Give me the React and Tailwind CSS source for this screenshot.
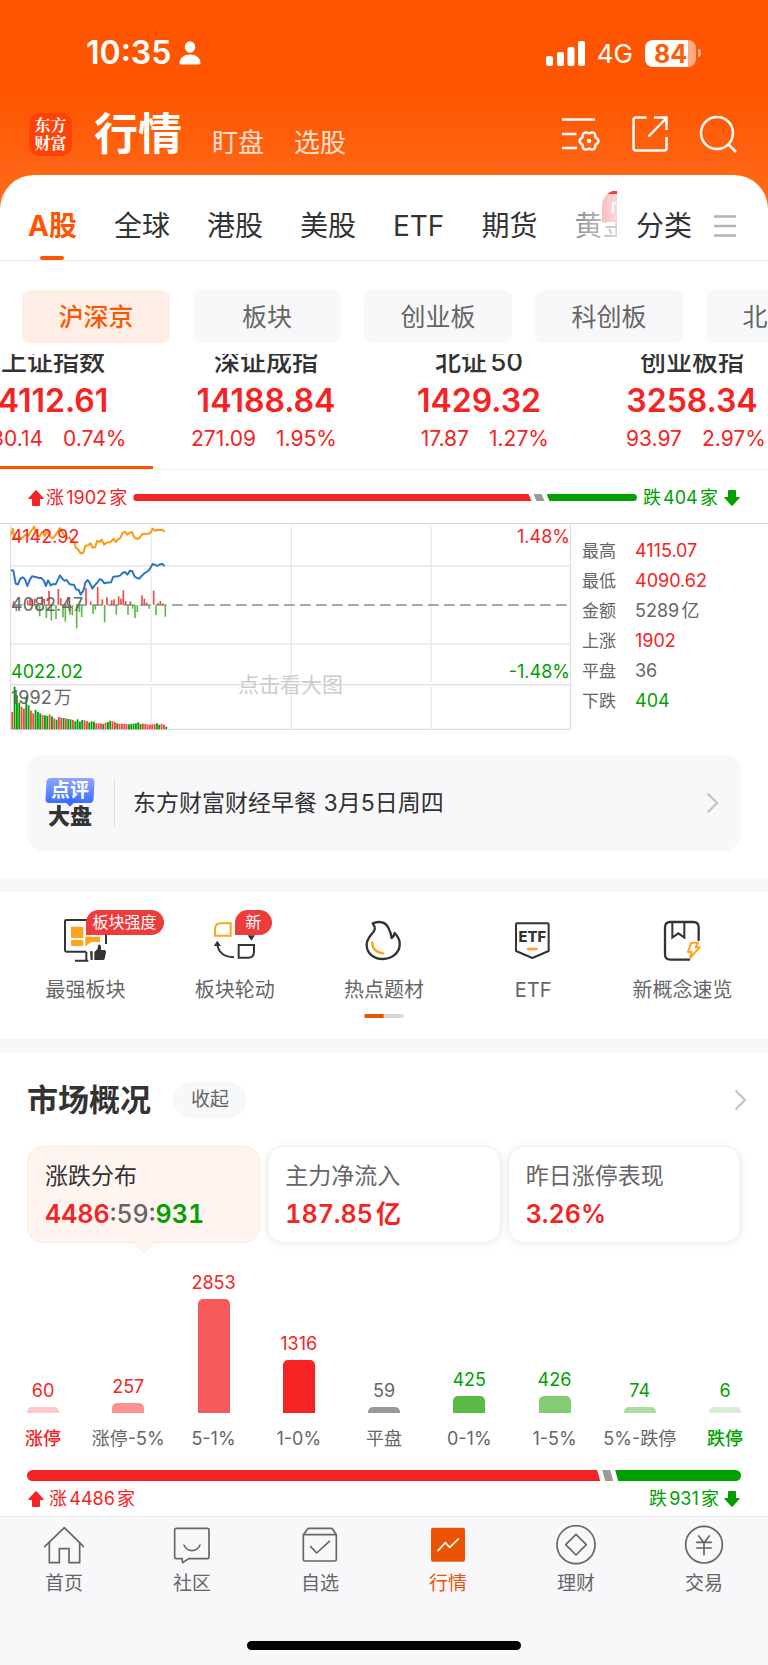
//
// MARKET PAGE
// ===========
// The A-share market page: index strip, intraday chart, shortcuts and the
// rise / fall distribution, with the application's bottom navigation.
//
const marketTabs = ["A股", "全球", "港股", "美股", "ETF", "期货"];
const boards = ["沪深京", "板块", "创业板", "科创板", "北交所"];

const indices = [
    { name: "上证指数", value: "4112.61", change: "30.14", percent: "0.74%" },
    { name: "深证成指", value: "14188.84", change: "271.09", percent: "1.95%" },
    { name: "北证50", value: "1429.32", change: "17.87", percent: "1.27%" },
    { name: "创业板指", value: "3258.34", change: "93.97", percent: "2.97%" },
];

const stats = [
    { label: "最高", value: "4115.07", colour: "text-[#f52323]" },
    { label: "最低", value: "4090.62", colour: "text-[#f52323]" },
    { label: "金额", value: "5289亿", colour: "text-[#666666]" },
    { label: "上涨", value: "1902", colour: "text-[#f52323]" },
    { label: "平盘", value: "36", colour: "text-[#666666]" },
    { label: "下跌", value: "404", colour: "text-[#00a000]" },
];

const distribution = [
    { label: "涨停", count: 60, height: 6, bar: "bg-[#fcc8c8]", text: "text-[#f52323]", labelText: "text-[#f52323] font-medium" },
    { label: "涨停-5%", count: 257, height: 10, bar: "bg-[#f99192]", text: "text-[#f52323]", labelText: "text-[#666666]" },
    { label: "5-1%", count: 2853, height: 114, bar: "bg-[#f75a5b]", text: "text-[#f52323]", labelText: "text-[#666666]" },
    { label: "1-0%", count: 1316, height: 53, bar: "bg-[#f52323]", text: "text-[#f52323]", labelText: "text-[#666666]" },
    { label: "平盘", count: 59, height: 6, bar: "bg-[#999999]", text: "text-[#666666]", labelText: "text-[#666666]" },
    { label: "0-1%", count: 425, height: 17, bar: "bg-[#5aba45]", text: "text-[#00a000]", labelText: "text-[#666666]" },
    { label: "1-5%", count: 426, height: 17, bar: "bg-[#84cc74]", text: "text-[#00a000]", labelText: "text-[#666666]" },
    { label: "5%-跌停", count: 74, height: 6, bar: "bg-[#addda2]", text: "text-[#00a000]", labelText: "text-[#666666]" },
    { label: "跌停", count: 6, height: 6, bar: "bg-[#d6eed1]", text: "text-[#00a000]", labelText: "text-[#00a000] font-medium" },
];

//
// Intraday series
// ===============
const averageLine = "33,60 38,40 44,68 52,70 60,66 68,68 76,58 84,62 92,50 102,34 110,58 118,64 126,50 134,62 142,46 152,66 160,68 170,54 180,38 190,56 200,70 208,66 216,78 222,80 228,98 234,102 242,114 250,112 256,92 264,90 271,84 278,97 285,96 292,76 299,80 305,73 312,88 320,82 332,80 341,70 347,80 354,72 361,68 368,52 375,50 382,58 390,52 396,50 403,66 411,71 418,68 428,56 445,55 452,52 458,40 464,46 474,44 487,43 494,50";
const priceLine = "33,164 40,166 47,205 54,207 61,190 68,186 75,192 82,212 90,192 96,183 110,186 117,188 124,188 131,195 138,212 144,195 152,210 159,206 167,207 180,180 187,190 194,196 200,194 208,206 216,208 222,208 228,222 236,224 242,238 250,226 256,202 263,194 270,204 277,220 284,210 291,203 299,192 305,193 313,204 320,202 333,201 340,184 354,183 361,180 368,172 375,170 382,178 390,166 397,168 404,184 411,188 418,190 425,182 433,174 440,170 448,163 458,146 465,148 472,152 480,147 487,146 494,152";

const strengthUp = [
    [41, 258], [83, 255], [90, 250], [97, 252], [104, 250], [126, 243], [133, 250], [147, 227],
    [175, 221], [182, 248], [203, 245], [258, 217], [272, 258], [293, 215], [307, 252], [321, 246],
    [335, 255], [342, 252], [356, 243], [363, 250], [370, 225], [377, 257], [391, 258], [426, 240],
    [433, 250], [440, 262], [461, 226], [474, 264], [481, 257], [488, 264],
];
const strengthDown = [
    [49, 288], [112, 283], [119, 303], [139, 308], [154, 315], [168, 311], [189, 306], [196, 319],
    [210, 298], [217, 300], [230, 339], [238, 290], [245, 305], [279, 296], [286, 283], [314, 321],
    [349, 298], [384, 298], [398, 280], [405, 308], [412, 290], [447, 280], [468, 299], [496, 304],
];

// Volume per interval, "r" for a rising interval and "g" for a falling one.
const volume = "r52 g128 g102 g80 r68 r62 g97 g72 r56 r48 g58 g52 g48 r43 g42 g40 r45 g39 r33 g29 r37 r35 g34 r33 g31 g30 r28 g24 g30 g23 g28 r27 r25 g21 g24 g23 r18 r18 r18 g16 r20 g22 g26 r24 r22 g18 r17 r17 r16 r16 g15 g16 g17 g18 g21 g16 r17 r16 r15 r14 r15 r16 g18 g14 r16 r14 g8".split(" ");

function Person() {
    return (
        <svg className="h-6 w-[22px]" viewBox="0 0 22 24" fill="white">
            <ellipse cx="11" cy="6" rx="5.2" ry="5.8" />
            <path d="M0.5 21.5C1 16.5 5 13.5 11 13.5S21 16.5 21.500 21.5C21.600 22.800 20.900 23.500 19.700 23.500H2.300C1.100 23.500 0.400 22.800 0.500 21.500Z" />
        </svg>
    );
}

function Signal() {
    return (
        <svg className="h-[25px] w-[39px]" viewBox="0 0 39 25" fill="white">
            <rect x="0" y="15" width="7" height="10" rx="2" />
            <rect x="11" y="11" width="7" height="14" rx="2" />
            <rect x="21.5" y="6" width="7" height="19" rx="2" />
            <rect x="32" y="0" width="7" height="25" rx="2" />
        </svg>
    );
}

function Chevron() {
    return (
        <svg className="h-[22px] w-[13px]" viewBox="0 0 13 22" fill="none" stroke="#c6c6c6" strokeWidth="2.4">
            <path d="M1.5 1.5L11 11L1.5 20.5" />
        </svg>
    );
}

function Arrow({ down }) {
    return (
        <svg className="h-4 w-4" viewBox="0 0 16 16" fill={down ? "#00a000" : "#f52323"}>
            <path d={down ? "M4 1Q4 0 5 0H11Q12 0 12 1V7H15.5Q16 7.5 15.5 8L8.7 15.4Q8 16 7.3 15.4L0.5 8Q0 7.5 0.5 7H4Z"
                          : "M4 15Q4 16 5 16H11Q12 16 12 15V9H15.5Q16 8.5 15.5 8L8.7 0.6Q8 0 7.3 0.6L0.5 8Q0 8.5 0.5 9H4Z"} />
        </svg>
    );
}

//
// BreadthBar
// ==========
// Slanted three part bar: risers, unchanged and fallers.
//
function BreadthBar({ up, down, className }) {
    return (
        <div className={"flex gap-[2px] " + className}>
            <div className="rounded-l-full bg-[#f52323] [clip-path:polygon(0_0,calc(100%-3px)_0,100%_100%,0_100%)]"
                 style={{ flex: up + " 1 0" }}></div>
            <div className="w-[11px] bg-[#999999] [clip-path:polygon(0_0,calc(100%-3px)_0,100%_100%,3px_100%)]"></div>
            <div className="rounded-r-full bg-[#00a000] [clip-path:polygon(0_0,100%_0,100%_100%,3px_100%)]"
                 style={{ flex: down + " 1 0" }}></div>
        </div>
    );
}

//
// IntradayChart
// =============
function IntradayChart() {
    return (
        <button className="relative block h-[206px] min-w-0 flex-1 text-left text-lg leading-6 [text-autospace:normal]" aria-label="分时图">
            <svg className="h-full w-full" viewBox="30 26 1683 618" preserveAspectRatio="none" fill="none">
                <g stroke="#e4e8f0" strokeWidth="4">
                    <path d="M32 152H1713M32 386H1713" />
                    <path d="M453 34V502M453 514V642M874 34V502M874 514V642M1293 34V502M1293 514V642" />
                </g>
                <path d="M32 28V642H1711V28M32 508H1711" stroke="#d5d8df" strokeWidth="3" />
                <path d="M36 269H1708" stroke="#8c8c8c" strokeWidth="4" strokeDasharray="32 16" />
                {volume.map((v, i) => (
                    <rect key={i} x={34 + i * 7} y={642 - Number(v.slice(1))} width="5.5" height={v.slice(1)}
                          fill={v[0] === "r" ? "#f54545" : "#00a000"} />
                ))}
                {strengthUp.map(([x, y]) => (
                    <path key={x} d={`M${x} 269V${y}`} stroke="#ee4a4a" strokeWidth="5" />
                ))}
                {strengthDown.map(([x, y]) => (
                    <path key={x} d={`M${x} 269V${y}`} stroke="#5aba45" strokeWidth="5" />
                ))}
                <polyline points={averageLine} stroke="#ff9a0c" strokeWidth="6" strokeLinejoin="round" />
                <polyline points={priceLine} stroke="#2f76c6" strokeWidth="6" strokeLinejoin="round" />
            </svg>
            <span className="absolute left-px top-px text-[#f52323]">4142.92</span>
            <span className="absolute right-px top-px text-[#f52323]">1.48%</span>
            <span className="absolute left-px top-[69px] text-[#666666]">4082.47</span>
            <span className="absolute left-px top-[136px] text-[#00a000]">4022.02</span>
            <span className="absolute right-px top-[136px] text-[#00a000]">-1.48%</span>
            <span className="absolute left-px top-[162px] text-[#666666]">1992万</span>
            <span className="absolute inset-x-0 top-[149px] text-center text-[21px] text-[#cccccc]">点击看大图</span>
        </button>
    );
}

//
// Shortcut icons
// ==============
const ink = "#333333";
const amber = "#ffa31a";

const shortcuts = [
    {
        label: "最强板块",
        badge: "板块强度",
        icon: (
            <>
                <path d="M75 107H16Q12 107 12 103V16Q12 12 16 12H131Q135 12 135 16V84" stroke={ink} strokeWidth="6" />
                <path d="M42 134H82M76 107V134" stroke={ink} strokeWidth="6" />
                <rect x="30" y="32" width="37" height="34" rx="3" fill={amber} />
                <rect x="30" y="72" width="37" height="18" rx="3" fill={amber} />
                <path d="M73 62H117V79Q88 72 76 90H73Z" fill={amber} />
                <path d="M87 106H95V132H89ZM100 132V108L109 100L112 86Q119 83 120 92V102H131Q136 103 135 109L131 128Q130 132 125 132Z" fill={ink} />
            </>
        ),
    },
    {
        label: "板块轮动",
        badge: "新",
        icon: (
            <>
                <path d="M15 59V40Q15 22 33 22H62V59Z" stroke={amber} strokeWidth="6" />
                <path d="M86 87H132V107Q132 125 114 125H86Z" stroke={ink} strokeWidth="6" />
                <path d="M72 124Q26 122 22 84" stroke={ink} strokeWidth="6" />
                <path d="M11 90L22 74L33 90ZM113 58H135L124 74Z" fill={ink} />
            </>
        ),
    },
    {
        label: "热点题材",
        icon: (
            <>
                <path d="M41 22Q75 10 88 35Q96 50 98 66Q105 62 107 51Q124 68 122 88C120 112 98 129 72 129C44 129 23 112 23 86C23 72 30 64 38 54C48 44 52 36 41 22Z"
                      stroke={ink} strokeWidth="7" strokeLinejoin="round" />
                <path d="M40 79Q39 108 73 112" stroke={amber} strokeWidth="7" strokeLinecap="round" />
            </>
        ),
    },
    {
        label: "ETF",
        icon: (
            <>
                <path d="M24 25Q24 22 27 22H119Q122 22 122 25V105L73 126L24 105Z" stroke={ink} strokeWidth="6" strokeLinejoin="round" />
                <text x="73" y="78" textAnchor="middle" fontSize="44" fontWeight="800" fill={ink}>ETF</text>
                <path d="M60 99H86" stroke={amber} strokeWidth="7" strokeLinecap="round" />
            </>
        ),
    },
    {
        label: "新概念速览",
        icon: (
            <>
                <path d="M125 72V34Q125 18 109 18H40Q24 18 24 34V115Q24 131 40 131H96" stroke={ink} strokeWidth="7" strokeLinecap="round" />
                <path d="M46 20V65L64 52L82 65V20" stroke={ink} strokeWidth="6" />
                <path d="M103 80H122L116 94H128L99 126L104 108H93Z" stroke={amber} strokeWidth="6" strokeLinejoin="round" />
            </>
        ),
    },
];

//
// Bottom navigation icons
// =======================
const navItems = [
    { label: "首页", icon: <path d="M2 65L61 8L119 65M16 52V113H46V71H75V113H107V52" /> },
    { label: "社区", icon: <path d="M13 10H106Q111 10 111 15V96Q111 101 106 101H50L32 113L30 101H13Q8 101 8 96V15Q8 10 13 10ZM36 60Q44 77 60 77Q76 77 84 60" /> },
    { label: "自选", icon: <path d="M10 29L22 13Q24 10 28 10H92Q96 10 98 13L109 29V103Q109 108 104 108H15Q10 108 10 103ZM10 29H109M32 65L50 84L88 49" /> },
    {
        label: "行情",
        active: true,
        icon: (
            <>
                <rect x="9" y="8" width="102" height="102" rx="6" fill="#ea5404" stroke="none" />
                <path d="M30 77L52 53L65 67L91 42" stroke="white" strokeWidth="5" />
            </>
        ),
    },
    { label: "理财", icon: <><circle cx="60" cy="59" r="57" /><path d="M60 28L91 59L60 90L29 59Z" /></> },
    { label: "交易", icon: <><circle cx="60" cy="59" r="55" /><path d="M44 33L60 53L76 33M38 52H82M38 69H82M60 53V89" /></> },
];

function Header() {
    return (
        <>
            <div className="flex h-10 items-center justify-between pl-[86px] pr-[67px] text-white">
                <div className="flex items-center gap-2">
                    <span className="text-[32px] font-semibold">10:35</span>
                    <Person />
                </div>
                <div className="flex items-center">
                    <Signal />
                    <span className="ml-3 text-[26px]">4G</span>
                    <span className="ml-3 h-[27px] w-[51px] rounded-lg bg-linear-to-r from-white from-84% to-white/50 to-84% text-center text-[25px] font-bold leading-7 text-[#ff5a05]">84</span>
                    <span className="ml-[2px] h-2 w-[3px] rounded-r-full bg-white/50"></span>
                </div>
            </div>

            <div className="mt-[31px] flex h-[60px] items-center pl-[29px] pr-[31px] text-white">
                <div className="flex h-[43px] w-[43px] flex-col items-center justify-center rounded-[10px] bg-[#ff4208] font-['Noto_Serif_CJK_SC','Noto_Sans_CJK_SC',serif] text-base font-bold leading-[18px]">
                    <span>东方</span>
                    <span>财富</span>
                </div>
                <nav className="ml-[22px] flex flex-1 items-end gap-[30px] text-[26px] leading-[43px] text-white/80">
                    <button className="text-[44px] font-bold leading-[60px] text-white">行情</button>
                    <button>盯盘</button>
                    <button>选股</button>
                </nav>
                <div className="flex items-center gap-[31px]">
                    <button aria-label="设置">
                        <svg className="h-9 w-10" viewBox="0 0 40 36" fill="none" stroke="white" strokeWidth="2.5" strokeLinejoin="round">
                            <path d="M1 3.5H34M1 18H15.5M1 32H16" />
                            <path d="M34.5 21.2Q40.5 25 34.5 28.8Q34.2 35.8 28 32.5Q21.8 35.8 21.5 28.8Q15.5 25 21.5 21.2Q21.8 14.2 28 17.5Q34.2 14.2 34.5 21.2Z" />
                            <circle cx="28" cy="25" r="2.2" fill="white" stroke="none" />
                        </svg>
                    </button>
                    <button aria-label="分享">
                        <svg className="h-9 w-9" viewBox="0 0 36 36" fill="none" stroke="white" strokeWidth="2.5">
                            <path d="M14.5 1.5H4Q1.5 1.5 1.5 4V32Q1.5 34.5 4 34.5H32Q34.5 34.5 34.5 32V21M22 1.5H34.5V14M16.5 20.5L34.5 2" />
                        </svg>
                    </button>
                    <button aria-label="搜索">
                        <svg className="h-[38px] w-[38px]" viewBox="0 0 38 38" fill="none" stroke="white" strokeWidth="2.5">
                            <circle cx="18" cy="18" r="16" />
                            <path d="M29 29L37 37" />
                        </svg>
                    </button>
                </div>
            </div>
        </>
    );
}

function MarketTabs() {
    return (
        <div className="flex h-[86px] border-b border-[#ececee] pt-4 text-[28px] text-[#333333]">
            <div className="relative flex min-w-0 flex-1 gap-[37px] overflow-hidden pl-7 whitespace-nowrap">
                {marketTabs.map((tab, i) => (
                    <button key={tab}
                            className={i === 0 ? "relative shrink-0 font-bold text-[#ff5500]" : "shrink-0"}>
                        {tab}
                        {i === 0 && <span className="absolute bottom-0 left-3 h-1 w-6 rounded-full bg-[#ff5500]"></span>}
                    </button>
                ))}
                <button className="relative shrink-0">
                    黄金
                    <span className="absolute -top-px left-7 h-8 w-14 rounded-t-2xl rounded-br-2xl bg-[#f03c3c] pl-2 text-left text-xl leading-8 text-white">new</span>
                </button>
                <span className="absolute bottom-0 right-0 top-[3px] w-[46px] bg-linear-to-r from-white/40 to-white/80"></span>
            </div>
            <button className="flex w-[151px] items-center gap-[22px] pl-[19px]">
                分类
                <svg className="h-[22px] w-[22px]" viewBox="0 0 22 22" stroke="#b3b3b3" strokeWidth="2.5">
                    <path d="M0 1.5H22M0 11H22M0 20.5H22" />
                </svg>
            </button>
        </div>
    );
}

function App() {
    return (
        <div className="flex min-h-screen flex-col overflow-hidden bg-white font-['Inter','Noto_Sans_CJK_SC',sans-serif] text-[#333333]">
            <header className="bg-linear-to-b from-[#ff5500] from-35% to-[#ff7420] pt-[33px]">
                <Header />
                <div className="mt-[11px] rounded-t-[34px] bg-white">
                    <MarketTabs />
                </div>
            </header>

            <div className="flex gap-[23px] pb-[11px] pl-[22px] pt-[29px] text-[25px] text-[#666666]">
                {boards.map((board, i) => (
                    <button key={board}
                            className={"h-[53px] w-[148px] shrink-0 rounded-lg pt-[2px] " +
                                (i === 0 ? "bg-[#ffeee6] font-medium text-[#ff5500]" : "bg-[#f8f8fa]")}>
                        {board}
                    </button>
                ))}
            </div>

            {/* The index strip is scrolled a little in both directions */}
            <div className="overflow-hidden border-b border-[#f0f0f2]">
                <div className="-ml-[47px] -mt-[9px] flex gap-[13px]">
                    {indices.map((item, i) => (
                        <button key={item.name}
                                className={"w-[200px] shrink-0 border-b-[3px] pb-[10px] " +
                                    (i === 0 ? "border-[#ff5500]" : "border-transparent")}>
                            <div className="text-[26px] font-medium leading-[34px] [text-autospace:normal]">{item.name}</div>
                            <div className="text-[32px] font-semibold leading-[43px] text-[#f52323]">{item.value}</div>
                            <div className="grid grid-cols-2 gap-5 text-[21px] leading-[34px] text-[#f52323]">
                                <span className="text-right">{item.change}</span>
                                <span className="text-left">{item.percent}</span>
                            </div>
                        </button>
                    ))}
                </div>
            </div>

            <div className="flex h-[53px] items-center px-7 pt-[2px] text-lg [text-autospace:normal]">
                <Arrow />
                <span className="ml-[2px] text-[#f52323]">涨1902家</span>
                <BreadthBar up={815} down={185} className="mx-[6px] h-[7px] flex-1" />
                <span className="mr-[6px] text-[#00a000]">跌404家</span>
                <Arrow down />
            </div>

            <div className="flex border-t border-[#d5d8df] pl-[10px]">
                <IntradayChart />
                <dl className="grid w-[197px] grid-cols-[53px_1fr] content-start pl-[11px] pt-3 leading-[30px]">
                    {stats.map((s) => (
                        <div key={s.label} className="contents">
                            <dt className="text-[17px] text-[#666666]">{s.label}</dt>
                            <dd className={"text-lg leading-[30px] [text-autospace:normal] " + s.colour}>{s.value}</dd>
                        </div>
                    ))}
                </dl>
            </div>

            <a href="#review" className="mx-[27px] mb-[27px] mt-[25px] flex h-24 items-center rounded-2xl bg-[#f8f8fa] pl-[18px] pr-[22px]">
                <div className="flex w-[50px] flex-col items-center">
                    <span className="relative h-[25px] w-[50px] text-center text-[19px] font-bold leading-[26px] text-white">
                        <span className="absolute inset-x-px inset-y-0 -skew-x-3 rounded-[4px] bg-linear-to-b from-[#8ea6ff] to-[#3a6dff]"></span>
                        <span className="absolute -bottom-[2px] left-[21px] h-2 w-2 rotate-45 bg-[#3a6dff]"></span>
                        <span className="relative">点评</span>
                    </span>
                    <span className="text-[22px] font-black leading-[26px]">大盘</span>
                </div>
                <span className="ml-[19px] h-[46px] w-px bg-[#dddde0]"></span>
                <span className="ml-[18px] flex-1 text-[23px]">东方财富财经早餐 3月5日周四</span>
                <Chevron />
            </a>

            <div className="h-[14px] bg-[#f7f8f9]"></div>

            <section className="px-[11px] pb-[21px] pt-6">
                <div className="grid grid-cols-5">
                    {shortcuts.map((s) => (
                        <button key={s.label} className="flex flex-col items-center">
                            <span className="relative">
                                <svg className="h-12 w-12" viewBox="3 0 144 144" fill="none">{s.icon}</svg>
                                {s.badge && (
                                    <span className="absolute -top-[6px] left-6 h-[25px] min-w-[37px] rounded-full rounded-bl-none bg-[#ec3c3c] px-[7px] text-base leading-[25px] text-white whitespace-nowrap">
                                        {s.badge}
                                    </span>
                                )}
                            </span>
                            <span className="mt-[10px] text-xl leading-8 text-[#666666]">{s.label}</span>
                        </button>
                    ))}
                </div>
                <div className="mx-auto mt-2 h-1 w-10 overflow-hidden rounded-full bg-[#d5d7df]">
                    <div className="h-1 w-5 rounded-full bg-[#ea5404]"></div>
                </div>
            </section>

            <div className="h-[14px] bg-[#f7f8f9]"></div>

            <section className="px-[27px] pt-7">
                <div className="flex h-[38px] items-center">
                    <h2 className="text-[31px] font-bold">市场概况</h2>
                    <button className="ml-[22px] h-9 rounded-full bg-[#f7f8fa] px-[18px] text-[19px] text-[#666666]">收起</button>
                    <a href="#overview" aria-label="市场概况" className="-mr-[6px] ml-auto"><Chevron /></a>
                </div>

                <div className="mt-[27px] grid grid-cols-3 gap-[7px] text-[23px] leading-8 text-[#666666]">
                    <button className="relative h-[97px] rounded-2xl border border-[#ffe6da] bg-[#fff4ef] px-[17px] text-left">
                        <div className="text-[#333333]">涨跌分布</div>
                        <div className="mt-[6px] text-[25px] font-semibold tabular-nums">
                            <span className="text-[#f52323]">4486</span>
                            <span className="font-medium">:59:</span>
                            <span className="text-[#00a000]">931</span>
                        </div>
                        <svg className="absolute left-1/2 top-full -mt-px h-3 w-[27px] -translate-x-1/2" viewBox="0 0 27 12">
                            <path d="M0 0Q2 0 4 2L12 10.5Q13.5 11.5 15 10.5L23 2Q25 0 27 0" fill="#fff4ef" stroke="#ffe6da" />
                        </svg>
                    </button>
                    <button className="h-[97px] rounded-2xl border border-[#ececec] px-[17px] text-left shadow-[0_1px_8px_rgba(0,0,0,0.08)]">
                        <div>主力净流入</div>
                        <div className="mt-[6px] text-[25px] font-semibold tabular-nums text-[#f52323] [text-autospace:normal]">187.85亿</div>
                    </button>
                    <button className="h-[97px] rounded-2xl border border-[#ececec] px-[17px] text-left shadow-[0_1px_8px_rgba(0,0,0,0.08)]">
                        <div>昨日涨停表现</div>
                        <div className="mt-[6px] text-[25px] font-semibold tabular-nums text-[#f52323]">3.26%</div>
                    </button>
                </div>

                <div className="flex justify-between text-lg leading-7 whitespace-nowrap">
                    {distribution.map((d) => (
                        <div key={d.label} className="flex w-8 flex-col items-center">
                            <div className="flex h-[170px] flex-col items-center justify-end">
                                <span className={d.text}>{d.count}</span>
                                <div className={"mt-[2px] w-8 rounded-t-[5px] " + d.bar} style={{ height: d.height }}></div>
                            </div>
                            <span className={"mt-3 " + d.labelText}>{d.label}</span>
                        </div>
                    ))}
                </div>

                <BreadthBar up={820} down={180} className="mt-[17px] h-[11px]" />
                <div className="flex h-[35px] items-center justify-between text-lg [text-autospace:normal]">
                    <span className="flex items-center gap-[5px] pl-px text-[#f52323]"><Arrow />涨4486家</span>
                    <span className="flex items-center gap-[5px] pr-px text-[#00a000]">跌931家<Arrow down /></span>
                </div>
            </section>

            <footer className="flex-1 border-t border-[#ebebf0] bg-[#f8f8fb] pb-[15px] pt-2">
                <nav className="grid grid-cols-6 text-[#666666]">
                    {navItems.map((item) => (
                        <a key={item.label} href="#" className={"flex flex-col items-center " + (item.active ? "text-[#ea5404]" : "")}>
                            <svg className="h-10 w-10" viewBox="0 0 120 120" fill="none" stroke="currentColor"
                                 strokeWidth="5" strokeLinejoin="round" strokeLinecap="round">
                                {item.icon}
                            </svg>
                            <span className="mt-[7px] text-[19px] leading-6">{item.label}</span>
                        </a>
                    ))}
                </nav>
                <div className="mx-auto mt-[45px] h-[9px] w-[274px] rounded-full bg-black"></div>
            </footer>
        </div>
    );
}
export default App
